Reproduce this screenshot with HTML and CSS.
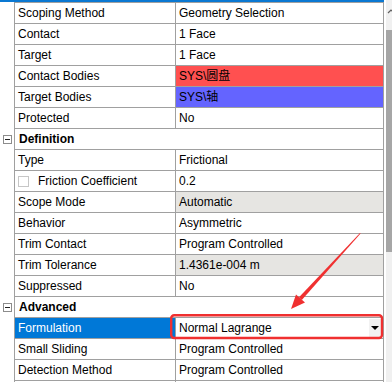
FILE: index.html
```html
<!DOCTYPE html>
<html lang="en">
  <head>
    <meta charset="UTF-8" />
    <title>Details</title>
    <link rel="stylesheet" href="styles.css">
  </head>
  <body>
    <div class="panel flex">
      <div class="grid">
        <div class="topbar"></div>
        <div class="row flex">
          <div class="gut"></div>
          <div class="cells first"><div class="name">Scoping Method</div><div class="val">Geometry Selection</div></div>
        </div>
        <div class="row flex">
          <div class="gut"></div>
          <div class="cells"><div class="name">Contact</div><div class="val">1 Face</div></div>
        </div>
        <div class="row flex">
          <div class="gut"></div>
          <div class="cells"><div class="name">Target</div><div class="val">1 Face</div></div>
        </div>
        <div class="row flex">
          <div class="gut"></div>
          <div class="cells"><div class="name">Contact Bodies</div><div class="val red">SYS\圆盘</div></div>
        </div>
        <div class="row flex">
          <div class="gut"></div>
          <div class="cells"><div class="name">Target Bodies</div><div class="val blue">SYS\轴</div></div>
        </div>
        <div class="row flex">
          <div class="gut"></div>
          <div class="cells"><div class="name">Protected</div><div class="val">No</div></div>
        </div>
        <!-- 分组标题 -->
        <div class="row flex">
          <div class="gut flex center"><span class="fold"></span></div>
          <div class="cells head"><div class="title">Definition</div></div>
        </div>
        <div class="row flex">
          <div class="gut"></div>
          <div class="cells"><div class="name">Type</div><div class="val">Frictional</div></div>
        </div>
        <div class="row flex">
          <div class="gut"></div>
          <div class="cells"><div class="name check flex"><span class="box"></span>Friction Coefficient</div><div class="val">0.2</div></div>
        </div>
        <div class="row flex">
          <div class="gut"></div>
          <div class="cells"><div class="name">Scope Mode</div><div class="val grey">Automatic</div></div>
        </div>
        <div class="row flex">
          <div class="gut"></div>
          <div class="cells"><div class="name">Behavior</div><div class="val">Asymmetric</div></div>
        </div>
        <div class="row flex">
          <div class="gut"></div>
          <div class="cells"><div class="name">Trim Contact</div><div class="val">Program Controlled</div></div>
        </div>
        <div class="row flex">
          <div class="gut"></div>
          <div class="cells"><div class="name">Trim Tolerance</div><div class="val grey">1.4361e-004 m</div></div>
        </div>
        <div class="row flex">
          <div class="gut"></div>
          <div class="cells"><div class="name">Suppressed</div><div class="val">No</div></div>
        </div>
        <div class="row flex">
          <div class="gut flex center"><span class="fold"></span></div>
          <div class="cells head"><div class="title">Advanced</div></div>
        </div>
        <div class="row flex">
          <div class="gut"></div>
          <div class="cells"><div class="name sel">Formulation</div><div class="val drop flex"><span class="txt">Normal Lagrange</span><span class="arrow flex center"><i></i></span></div></div>
        </div>
        <div class="row flex">
          <div class="gut"></div>
          <div class="cells"><div class="name">Small Sliding</div><div class="val">Program Controlled</div></div>
        </div>
        <div class="row flex">
          <div class="gut"></div>
          <div class="cells"><div class="name">Detection Method</div><div class="val">Program Controlled</div></div>
        </div>
        <div class="row flex">
          <div class="gut"></div>
          <div class="cells"><div class="name"></div><div class="val"></div></div>
        </div>
      </div>
      <div class="scroll">
        <svg class="up" width="6" height="6" viewBox="0 0 6 6"><path d="M1 5 L4 2 L7 5" fill="none" stroke="#606060" stroke-width="1.2"/></svg>
        <div class="thumb"></div>
      </div>
    </div>

    <!-- 红色标注 -->
    <svg class="mark" width="392" height="382" viewBox="0 0 392 382">
      <rect x="171.2" y="315.2" width="210.8" height="22.8" rx="3" fill="none" stroke="#f03030" stroke-width="2.4"/>
      <polygon points="360,233 360.6,233.5 301.8,300 299,297.3" fill="#f03030"/>
      <polygon points="291,309 296,294.5 305,302.5" fill="#f03030"/>
    </svg>
  </body>
</html>
```

FILE: styles.css
```css
* {
  margin: 0;
  padding: 0;
  box-sizing: border-box;
}
body {
  background-color: #fff;
  overflow: hidden;
  font-family: "Liberation Sans", "Noto Sans CJK SC", sans-serif;
  font-size: 12px;
  color: #000;
}
.flex {
  display: flex;
}
.center {
  justify-content: center;
  align-items: center;
}

.panel {
  width: 392px;
  height: 382px;
  overflow: hidden;
}
.grid {
  width: 384px;
  flex-shrink: 0;
}
.topbar {
  height: 2px;
  background-color: #0a78d2;
}

.row {
  height: 21px;
}
.row .gut {
  width: 14px;
  flex-shrink: 0;
  padding-right: 1px;
}
.row .cells {
  width: 370px;
  display: grid;
  grid-template-columns: 161px 1fr;
  border-left: 1px solid #a0a0a0;
  border-right: 1px solid #a0a0a0;
  border-bottom: 1px solid #a0a0a0;
}
.row .first {
  height: 22px;
  border-top: 1px solid #a0a0a0;
}
.row:nth-child(2) {
  height: 22px;
}
.row .name {
  height: 20px;
  line-height: 20px;
  padding-left: 3px;
  border-right: 1px solid #a0a0a0;
  white-space: nowrap;
  overflow: hidden;
}
.row .val {
  height: 20px;
  line-height: 20px;
  padding-left: 3px;
  white-space: nowrap;
  overflow: hidden;
}
.row .head {
  grid-template-columns: 1fr;
}
.row .title {
  height: 20px;
  line-height: 20px;
  padding-left: 4px;
  font-weight: bold;
}

.fold {
  position: relative;
  width: 9px;
  height: 9px;
  margin-left: 2px;
  border: 1px solid #8c8c8c;
}
.fold::after {
  content: "";
  position: absolute;
  left: 1px;
  top: 3px;
  width: 5px;
  height: 1px;
  background-color: #222;
}

.check {
  align-items: center;
  padding-left: 4px;
}
.check .box {
  width: 11px;
  height: 11px;
  border: 1px solid #c6c6c6;
  margin-right: 9px;
}

.red {
  background-color: #ff5050;
}
.blue {
  background-color: #6464ff;
}
.grey {
  background-color: #e6e5e2;
}
.sel {
  background-color: #0078d7;
  color: #fff;
}
.drop {
  justify-content: space-between;
  padding-right: 2px;
}
.drop .arrow {
  width: 12px;
  height: 18px;
  margin-top: 1px;
  background-color: #f2f2f2;
}
.drop .arrow i {
  width: 0;
  height: 0;
  border-left: 4px solid transparent;
  border-right: 4px solid transparent;
  border-top: 4px solid #000;
}

.scroll {
  width: 6px;
  margin-left: 2px;
  height: 382px;
  background-color: #f0f0f0;
  position: relative;
}
.scroll .up {
  position: absolute;
  left: 1px;
  top: 8px;
}
.scroll .thumb {
  position: absolute;
  left: 0;
  top: 30px;
  width: 6px;
  height: 222px;
  background-color: #a6a6a6;
}

.mark {
  position: absolute;
  left: 0;
  top: 0;
  pointer-events: none;
}
```
